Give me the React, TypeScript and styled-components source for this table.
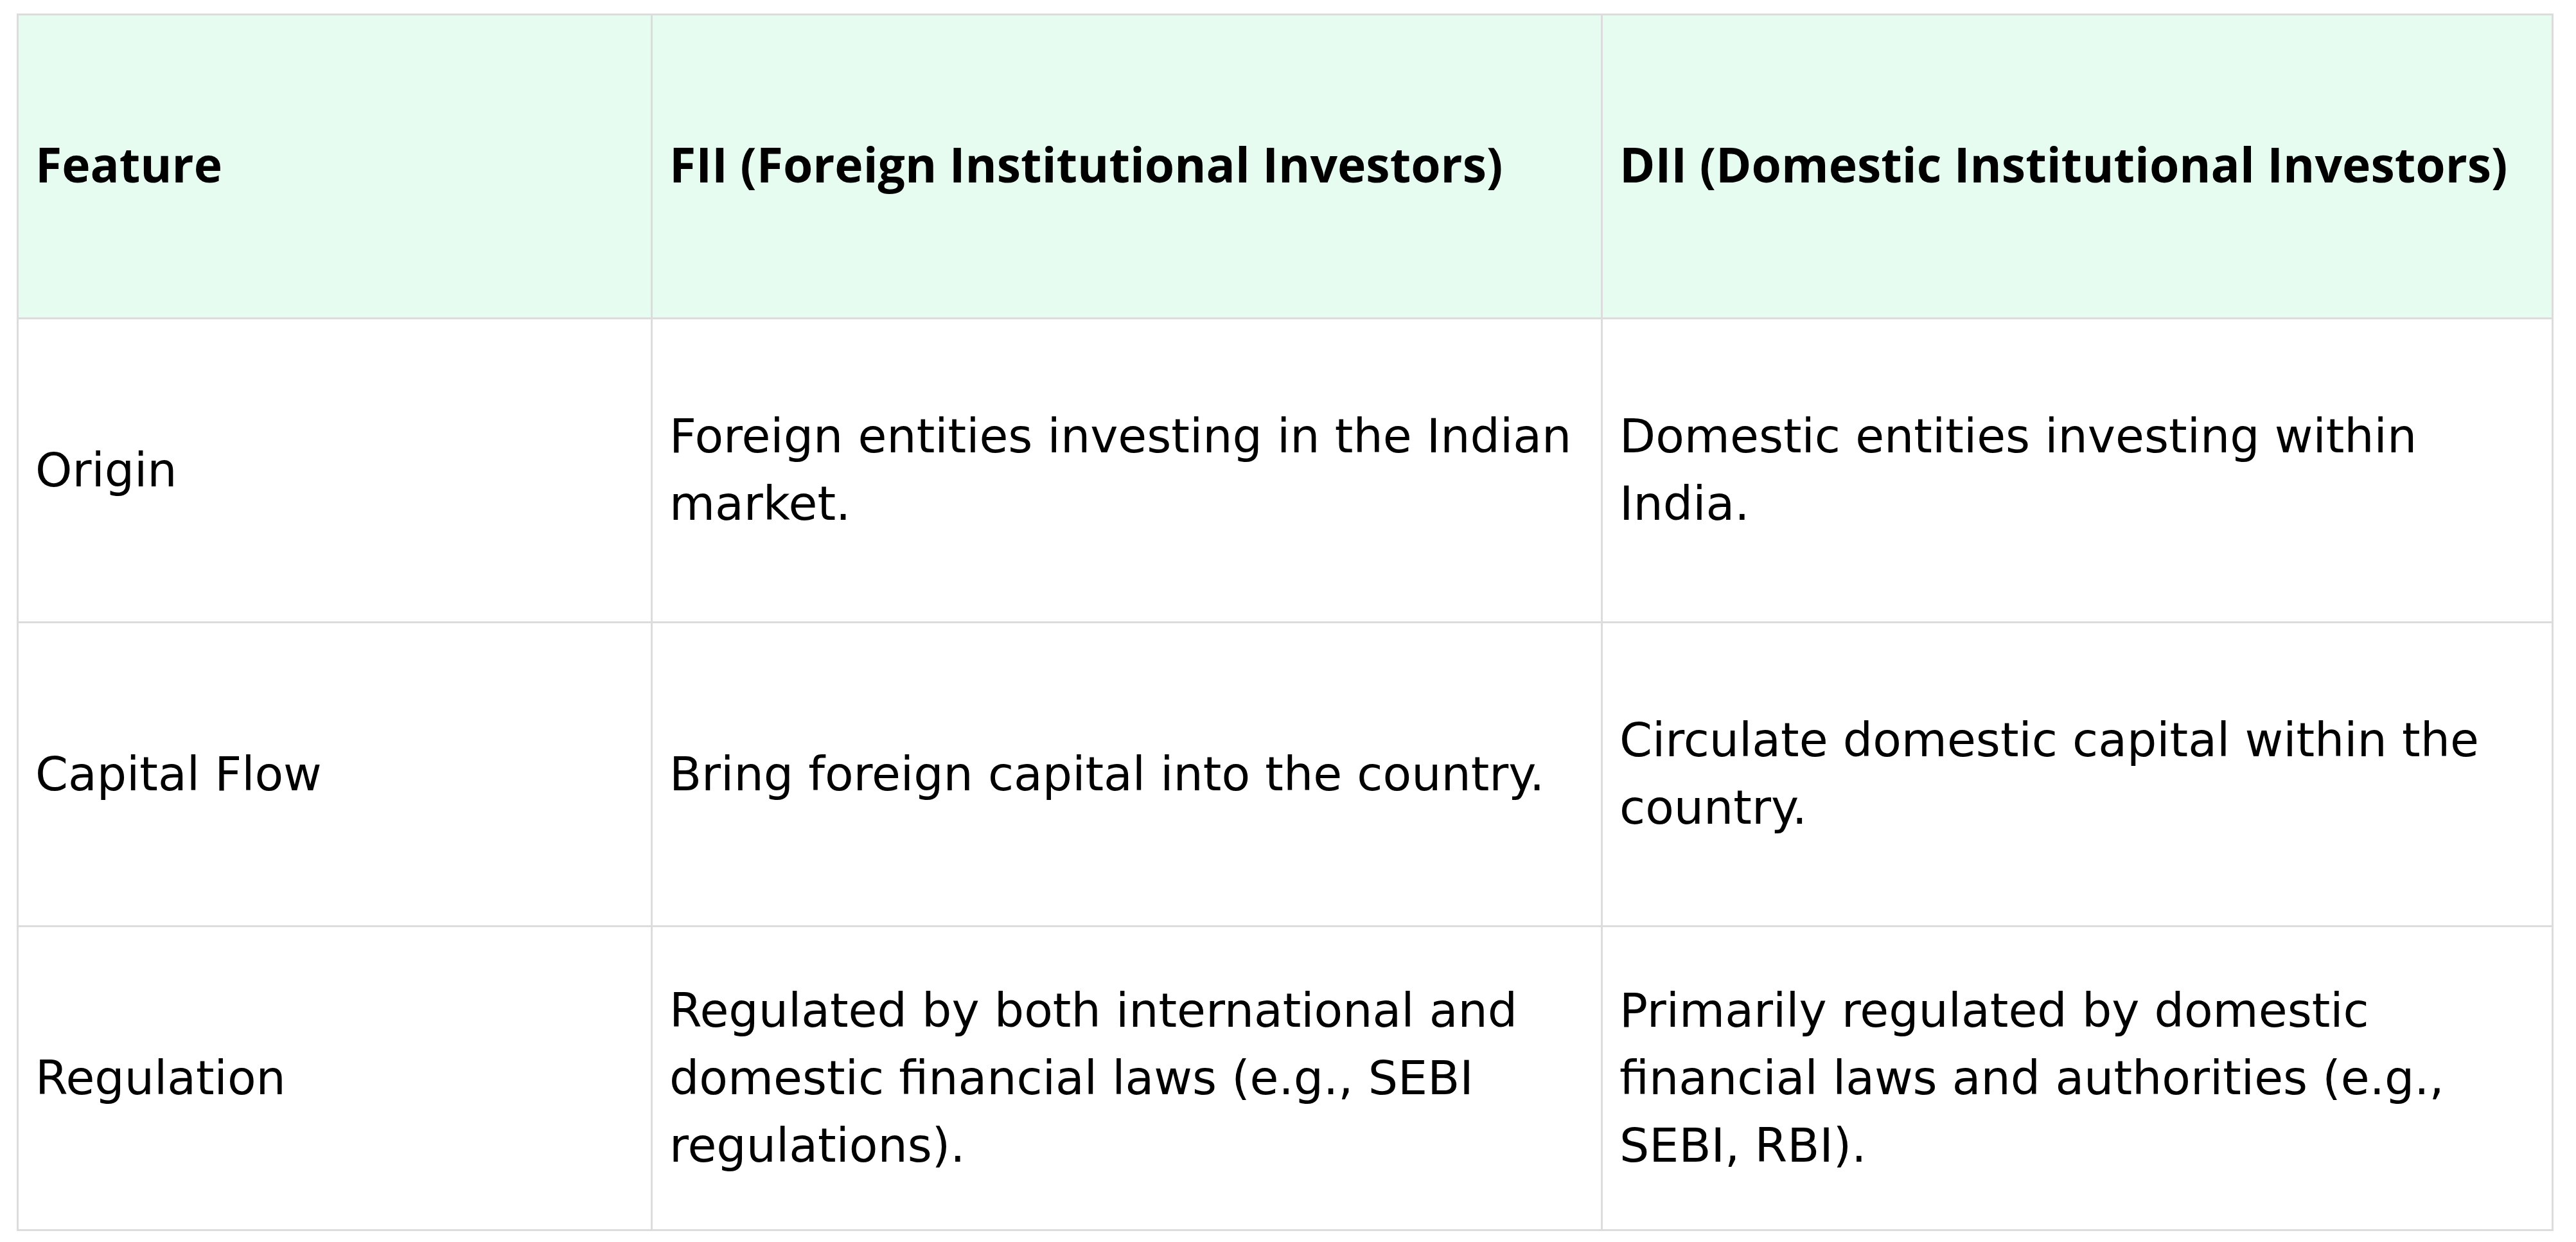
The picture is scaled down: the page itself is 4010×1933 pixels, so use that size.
import React from "react";
import styled, { createGlobalStyle } from "styled-components";

const GlobalStyle = createGlobalStyle`
  html, body {
    margin: 0;
    padding: 0;
    background: #ffffff;
  }
  body {
    font-family: "DejaVu Sans", "Liberation Sans", sans-serif;
    color: #000000;
  }
`;

const Page = styled.div`
  padding: 21px 0 0 26px;
`;

const Table = styled.div`
  display: grid;
  width: max-content;
  grid-template-columns: 984px 1476px 1477px;
  grid-auto-rows: 470px;
  gap: 3px;
  border: 3px solid #dcdcdc;
  background: #dcdcdc;
`;

const Cell = styled.div<{ $head?: boolean }>`
  display: flex;
  align-items: center;
  padding: ${(p) => (p.$head ? "0 22px 8px 26px" : "0 22px 2px 26px")};
  background: ${(p) => (p.$head ? "#e6fcf1" : "#ffffff")};
  font-family: ${(p) =>
    p.$head ? '"Open Sans", "DejaVu Sans", sans-serif' : '"DejaVu Sans", "Liberation Sans", sans-serif'};
  font-weight: ${(p) => (p.$head ? 700 : 400)};
  font-size: ${(p) => (p.$head ? "75px" : "73px")};
  line-height: 105px;
  color: #000000;
`;

const header = ["Feature", "FII (Foreign Institutional Investors)", "DII (Domestic Institutional Investors)"];

const rows: string[][] = [
  ["Origin", "Foreign entities investing in the Indian market.", "Domestic entities investing within India."],
  ["Capital Flow", "Bring foreign capital into the country.", "Circulate domestic capital within the country."],
  [
    "Regulation",
    "Regulated by both international and domestic financial laws (e.g., SEBI regulations).",
    "Primarily regulated by domestic financial laws and authorities (e.g., SEBI, RBI).",
  ],
];

export default function App() {
  return (
    <>
      <GlobalStyle />
      <Page>
        <Table>
          {header.map((h) => (
            <Cell key={h} $head>
              {h}
            </Cell>
          ))}
          {rows.map((r) =>
            r.map((c, i) => <Cell key={r[0] + i}>{c}</Cell>)
          )}
        </Table>
      </Page>
    </>
  );
}
